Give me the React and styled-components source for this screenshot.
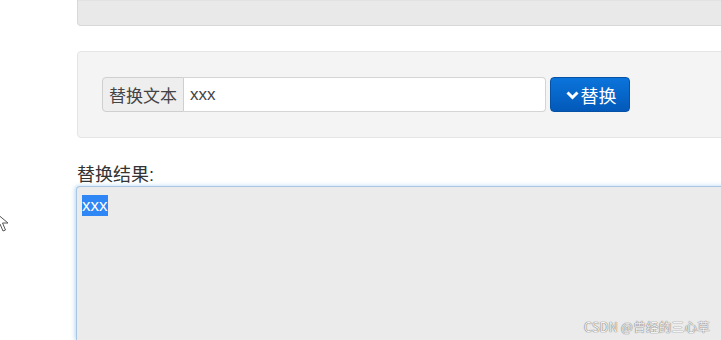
import React from "react";
import styled, { createGlobalStyle } from "styled-components";

const GlobalStyle = createGlobalStyle`
  html, body {
    margin: 0;
    padding: 0;
    background: #ffffff;
    overflow: hidden;
  }
  body {
    font-family: "Liberation Sans", "Noto Sans CJK SC", sans-serif;
    color: #333;
  }
`;

const Page = styled.div`
  position: relative;
  width: 721px;
  height: 340px;
  overflow: hidden;
  padding-left: 77px;
  box-sizing: border-box;
  display: flex;
  flex-direction: column;
`;

const TopWell = styled.div`
  width: 700px;
  height: 25px;
  flex-shrink: 0;
  background: #e9e9e9;
  border: 1px solid #d8d8d8;
  border-top: none;
  border-radius: 0 0 4px 4px;
  box-shadow: inset 0 1px 1px rgba(0, 0, 0, 0.03);
`;

const Well = styled.div`
  width: 700px;
  margin-top: 25px;
  flex-shrink: 0;
  box-sizing: border-box;
  padding: 25px 24px;
  background: #f4f4f4;
  border: 1px solid #e5e5e5;
  border-radius: 4px;
  display: flex;
  align-items: center;
  gap: 4px;
`;

const InputGroup = styled.div`
  display: flex;
  height: 35px;
`;

const Addon = styled.span`
  width: 82px;
  box-sizing: border-box;
  display: flex;
  align-items: center;
  justify-content: center;
  background: #eeeeee;
  border: 1px solid #cfcfcf;
  border-radius: 4px 0 0 4px;
  font-size: 17px;
  color: #444;
`;

const TextInput = styled.div`
  width: 362px;
  box-sizing: border-box;
  display: flex;
  align-items: center;
  padding-left: 6px;
  background: #fff;
  border: 1px solid #d4d4d4;
  border-left: none;
  border-radius: 0 4px 4px 0;
  font-size: 17px;
  color: #444;
`;

const Button = styled.button`
  width: 80px;
  height: 35px;
  box-sizing: border-box;
  display: flex;
  align-items: center;
  justify-content: center;
  gap: 2px;
  padding: 0 0 0 2px;
  border: 1px solid #0451a5;
  border-radius: 4px;
  background: linear-gradient(#0b74db, #0359b9);
  color: #fff;
  font-family: "Liberation Sans", "Noto Sans CJK SC", sans-serif;
  font-size: 18px;
  cursor: pointer;
`;

const Label = styled.div`
  margin-top: 26px;
  font-size: 18px;
  line-height: 22px;
  color: #333;
`;

const ResultBox = styled.div`
  width: 700px;
  flex: 1;
  margin-left: -1px;
  box-sizing: border-box;
  padding: 8px 5px;
  background: #ebebeb;
  border: 1px solid #a9c6e3;
  border-bottom: none;
  border-radius: 4px 0 0 0;
  box-shadow: -1px 0 4px rgba(102, 175, 233, 0.5);
  font-size: 17px;
  line-height: 21px;
`;

const Selected = styled.span`
  display: inline-block;
  height: 21px;
  line-height: 21px;
  background: #2f86f5;
  color: #fff;
`;

const Watermark = styled.div`
  position: absolute;
  right: 11px;
  bottom: 4px;
  font-size: 12.5px;
  font-family: "Noto Sans CJK SC", sans-serif;
  color: #f2f2f2;
  text-shadow: 0 0 1px #666, 0 0 1px #777;
  letter-spacing: 0.3px;
`;

const Pointer = styled.svg`
  position: absolute;
  left: -5px;
  top: 212px;
`;

const Chevron = () => (
  <svg width="13" height="10" viewBox="0 0 13 10">
    <path d="M1.5 2.5 L6.5 7.5 L11.5 2.5" fill="none" stroke="#fff" strokeWidth="3" strokeLinejoin="miter" />
  </svg>
);

const App = () => {
  return (
    <React.Fragment>
      <GlobalStyle />
      <Page>
        <TopWell />
        <Well>
          <InputGroup>
            <Addon>替换文本</Addon>
            <TextInput>xxx</TextInput>
          </InputGroup>
          <Button>
            <Chevron />
            替换
          </Button>
        </Well>
        <Label>替换结果:</Label>
        <ResultBox>
          <Selected>xxx</Selected>
        </ResultBox>
        <Pointer width="14" height="22" viewBox="0 0 14 22">
          <path d="M1 1 L1 16 L5 12 L8 19 L10.5 18 L7.5 11 L13 11 Z" fill="#fff" stroke="#555" strokeWidth="1" />
        </Pointer>
        <Watermark>CSDN @曾经的三心草</Watermark>
      </Page>
    </React.Fragment>
  );
};

export default App;
